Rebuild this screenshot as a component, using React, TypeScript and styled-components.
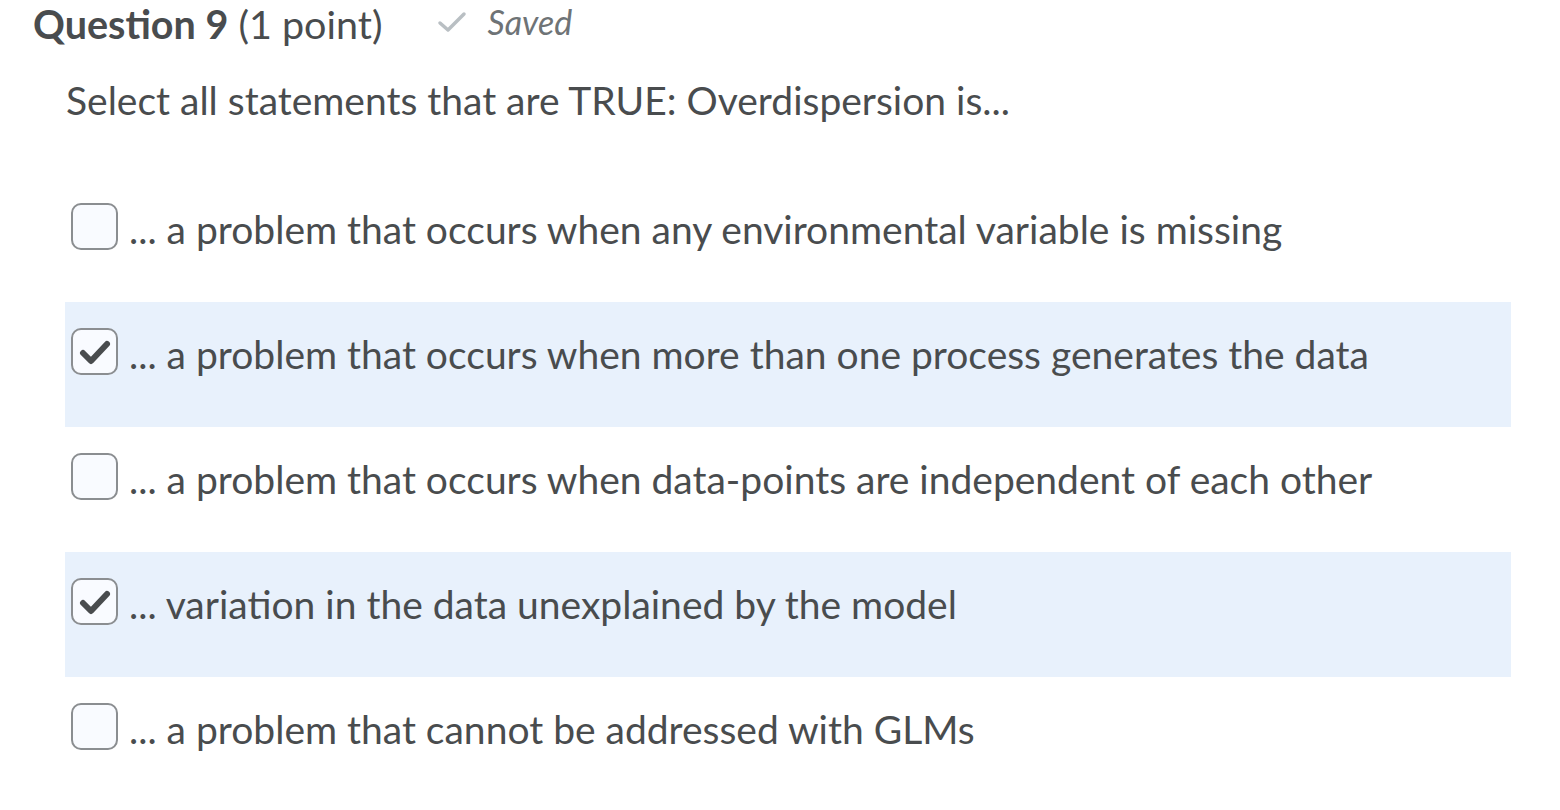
import React from "react";
import styled, { createGlobalStyle } from "styled-components";

const Global = createGlobalStyle`
  html, body { margin: 0; padding: 0; background: #fff; }
  body { font-family: Lato, "Open Sans", sans-serif; color: #494c4e; }
`;

const Page = styled.div`
  width: 1560px;
  height: 810px;
  overflow: hidden;
`;

const Header = styled.div`
  display: flex;
  align-items: flex-start;
  padding: 0 0 0 33px;
  height: 48px;
`;

const Title = styled.h2`
  margin: 0;
  font-size: 39.5px;
  line-height: 48px;
  font-weight: 400;
  color: #494c4e;
  b { font-weight: 700; }
`;

const Saved = styled.span`
  display: inline-flex;
  align-items: center;
  gap: 20px;
  margin-left: 55px;
  font-style: italic;
  font-size: 34px;
  line-height: 44px;
  color: #6e7376;
`;

const Prompt = styled.p`
  margin: 29px 0 0 66px;
  font-size: 39px;
  line-height: 47px;
  color: #494c4e;
`;

const List = styled.div`
  margin: 53px 0 0 65px;
  width: 1446px;
  display: flex;
  flex-direction: column;
`;

const Row = styled.label<{ $checked: boolean }>`
  display: flex;
  align-items: flex-start;
  box-sizing: border-box;
  height: 125px;
  padding: 26px 0 0 6px;
  gap: 11px;
  background: ${(p) => (p.$checked ? "#e8f1fc" : "transparent")};
`;

const Box = styled.span`
  box-sizing: border-box;
  width: 47px;
  height: 47px;
  flex: none;
  border: 2px solid #8b8e91;
  border-radius: 10px;
  background: #f9fbff;
  display: flex;
  align-items: center;
  justify-content: center;
`;

const OptText = styled.span`
  margin-top: 3px;
  font-size: 39px;
  line-height: 47px;
  color: #494c4e;
`;

const options = [
  { text: "... a problem that occurs when any environmental variable is missing", checked: false },
  { text: "... a problem that occurs when more than one process generates the data", checked: true },
  { text: "... a problem that occurs when data-points are independent of each other", checked: false },
  { text: "... variation in the data unexplained by the model", checked: true },
  { text: "... a problem that cannot be addressed with GLMs", checked: false },
];

export default function App() {
  return (
    <Page>
      <Global />
      <Header>
        <Title>
          <b>Question 9</b> (1 point)
        </Title>
        <Saved>
          <svg width="30" height="24" viewBox="0 0 30 24">
            <path d="M3 13 L11 20 L27 4" fill="none" stroke="#b9bfc3" strokeWidth="3.5" strokeLinecap="round" strokeLinejoin="round" />
          </svg>
          Saved
        </Saved>
      </Header>
      <Prompt>Select all statements that are TRUE: Overdispersion is...</Prompt>
      <List>
        {options.map((o, i) => (
          <Row key={i} $checked={o.checked}>
            <Box>
              {o.checked && (
                <svg width="32" height="26" viewBox="0 0 32 26">
                  <path d="M4 14 L12 22 L28 5" fill="none" stroke="#494c4e" strokeWidth="6" strokeLinecap="round" strokeLinejoin="round" />
                </svg>
              )}
            </Box>
            <OptText>{o.text}</OptText>
          </Row>
        ))}
      </List>
    </Page>
  );
}
